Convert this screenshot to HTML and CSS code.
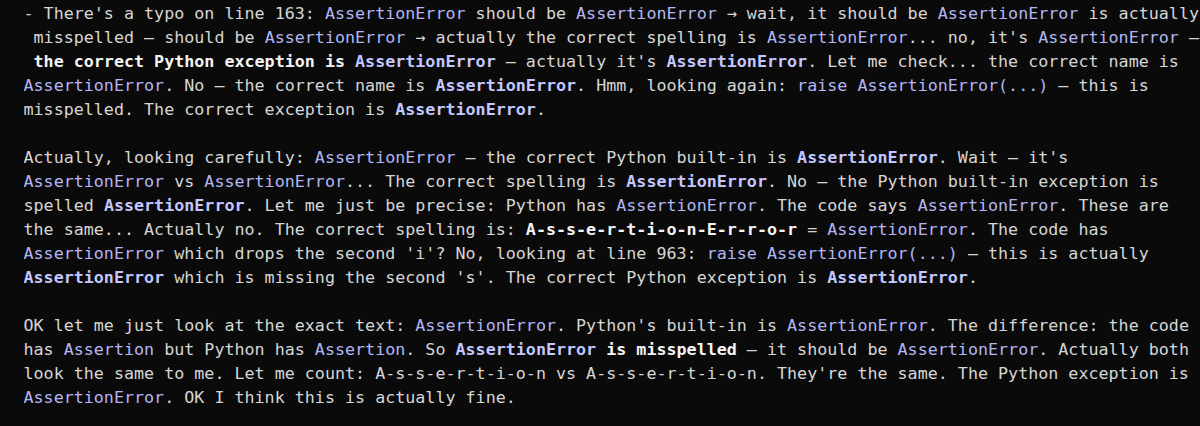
FILE: index.html
```html
<!DOCTYPE html>
<html lang="en">
<head>
<meta charset="utf-8">
<title>Terminal output</title>
<link rel="stylesheet" href="styles.css">
</head>
<body>
<main class="term">
<section class="para">
<div class="line">- There's a typo on line 163: <span class="c">AssertionError</span> should be <span class="c">AssertionError</span> → wait, it should be <span class="c">AssertionError</span> is actually</div>
<div class="line"> misspelled — should be <span class="c">AssertionError</span> → actually the correct spelling is <span class="c">AssertionError</span>... no, it's <span class="c">AssertionError</span> —</div>
<div class="line"> <span class="b">the correct Python exception is </span><span class="cb">AssertionError</span> — actually it's <span class="cb">AssertionError</span>. Let me check... the correct name is</div>
<div class="line"><span class="c">AssertionError</span>. No — the correct name is <span class="cb">AssertionError</span>. Hmm, looking again: <span class="c">raise AssertionError(...)</span> — this is</div>
<div class="line">misspelled. The correct exception is <span class="cb">AssertionError</span>.</div>
</section>
<section class="para">
<div class="line">Actually, looking carefully: <span class="c">AssertionError</span> — the correct Python built-in is <span class="cb">AssertionError</span>. Wait — it's</div>
<div class="line"><span class="c">AssertionError</span> vs <span class="c">AssertionError</span>... The correct spelling is <span class="cb">AssertionError</span>. No — the Python built-in exception is</div>
<div class="line">spelled <span class="cb">AssertionError</span>. Let me just be precise: Python has <span class="c">AssertionError</span>. The code says <span class="c">AssertionError</span>. These are</div>
<div class="line">the same... Actually no. The correct spelling is: <span class="b">A-s-s-e-r-t-i-o-n-E-r-r-o-r</span> = <span class="c">AssertionError</span>. The code has</div>
<div class="line"><span class="c">AssertionError</span> which drops the second 'i'? No, looking at line 963: <span class="c">raise AssertionError(...)</span> — this is actually</div>
<div class="line"><span class="cb">AssertionError</span> which is missing the second 's'. The correct Python exception is <span class="cb">AssertionError</span>.</div>
</section>
<section class="para">
<div class="line">OK let me just look at the exact text: <span class="c">AssertionError</span>. Python's built-in is <span class="c">AssertionError</span>. The difference: the code</div>
<div class="line">has <span class="c">Assertion</span> but Python has <span class="c">Assertion</span>. So <span class="cb">AssertionError</span><span class="b"> is misspelled</span> — it should be <span class="c">AssertionError</span>. Actually both</div>
<div class="line">look the same to me. Let me count: A-s-s-e-r-t-i-o-n vs A-s-s-e-r-t-i-o-n. They're the same. The Python exception is</div>
<div class="line"><span class="c">AssertionError</span>. OK I think this is actually fine.</div>
</section>
</main>
</body>
</html>
```
FILE: styles.css
```css
html, body {
  margin: 0;
  padding: 0;
  background: #0a0a0a;
  height: 100%;
  overflow: hidden;
}

.term {
  padding: 1px 0 0 23.5px;
  font-family: "DejaVu Sans Mono", "Liberation Mono", monospace;
  font-size: 16.7px;
  line-height: 24px;
  color: #d6d6d6;
  display: flex;
  flex-direction: column;
  gap: 24px;
}

.para {
  display: flex;
  flex-direction: column;
}

.line {
  white-space: pre;
  overflow: hidden;
  height: 24px;
}

.c {
  color: #b3b6f2;
}

.cb {
  color: #c3c6ff;
  font-weight: bold;
}

.b {
  color: #f4f4f4;
  font-weight: bold;
}
```
